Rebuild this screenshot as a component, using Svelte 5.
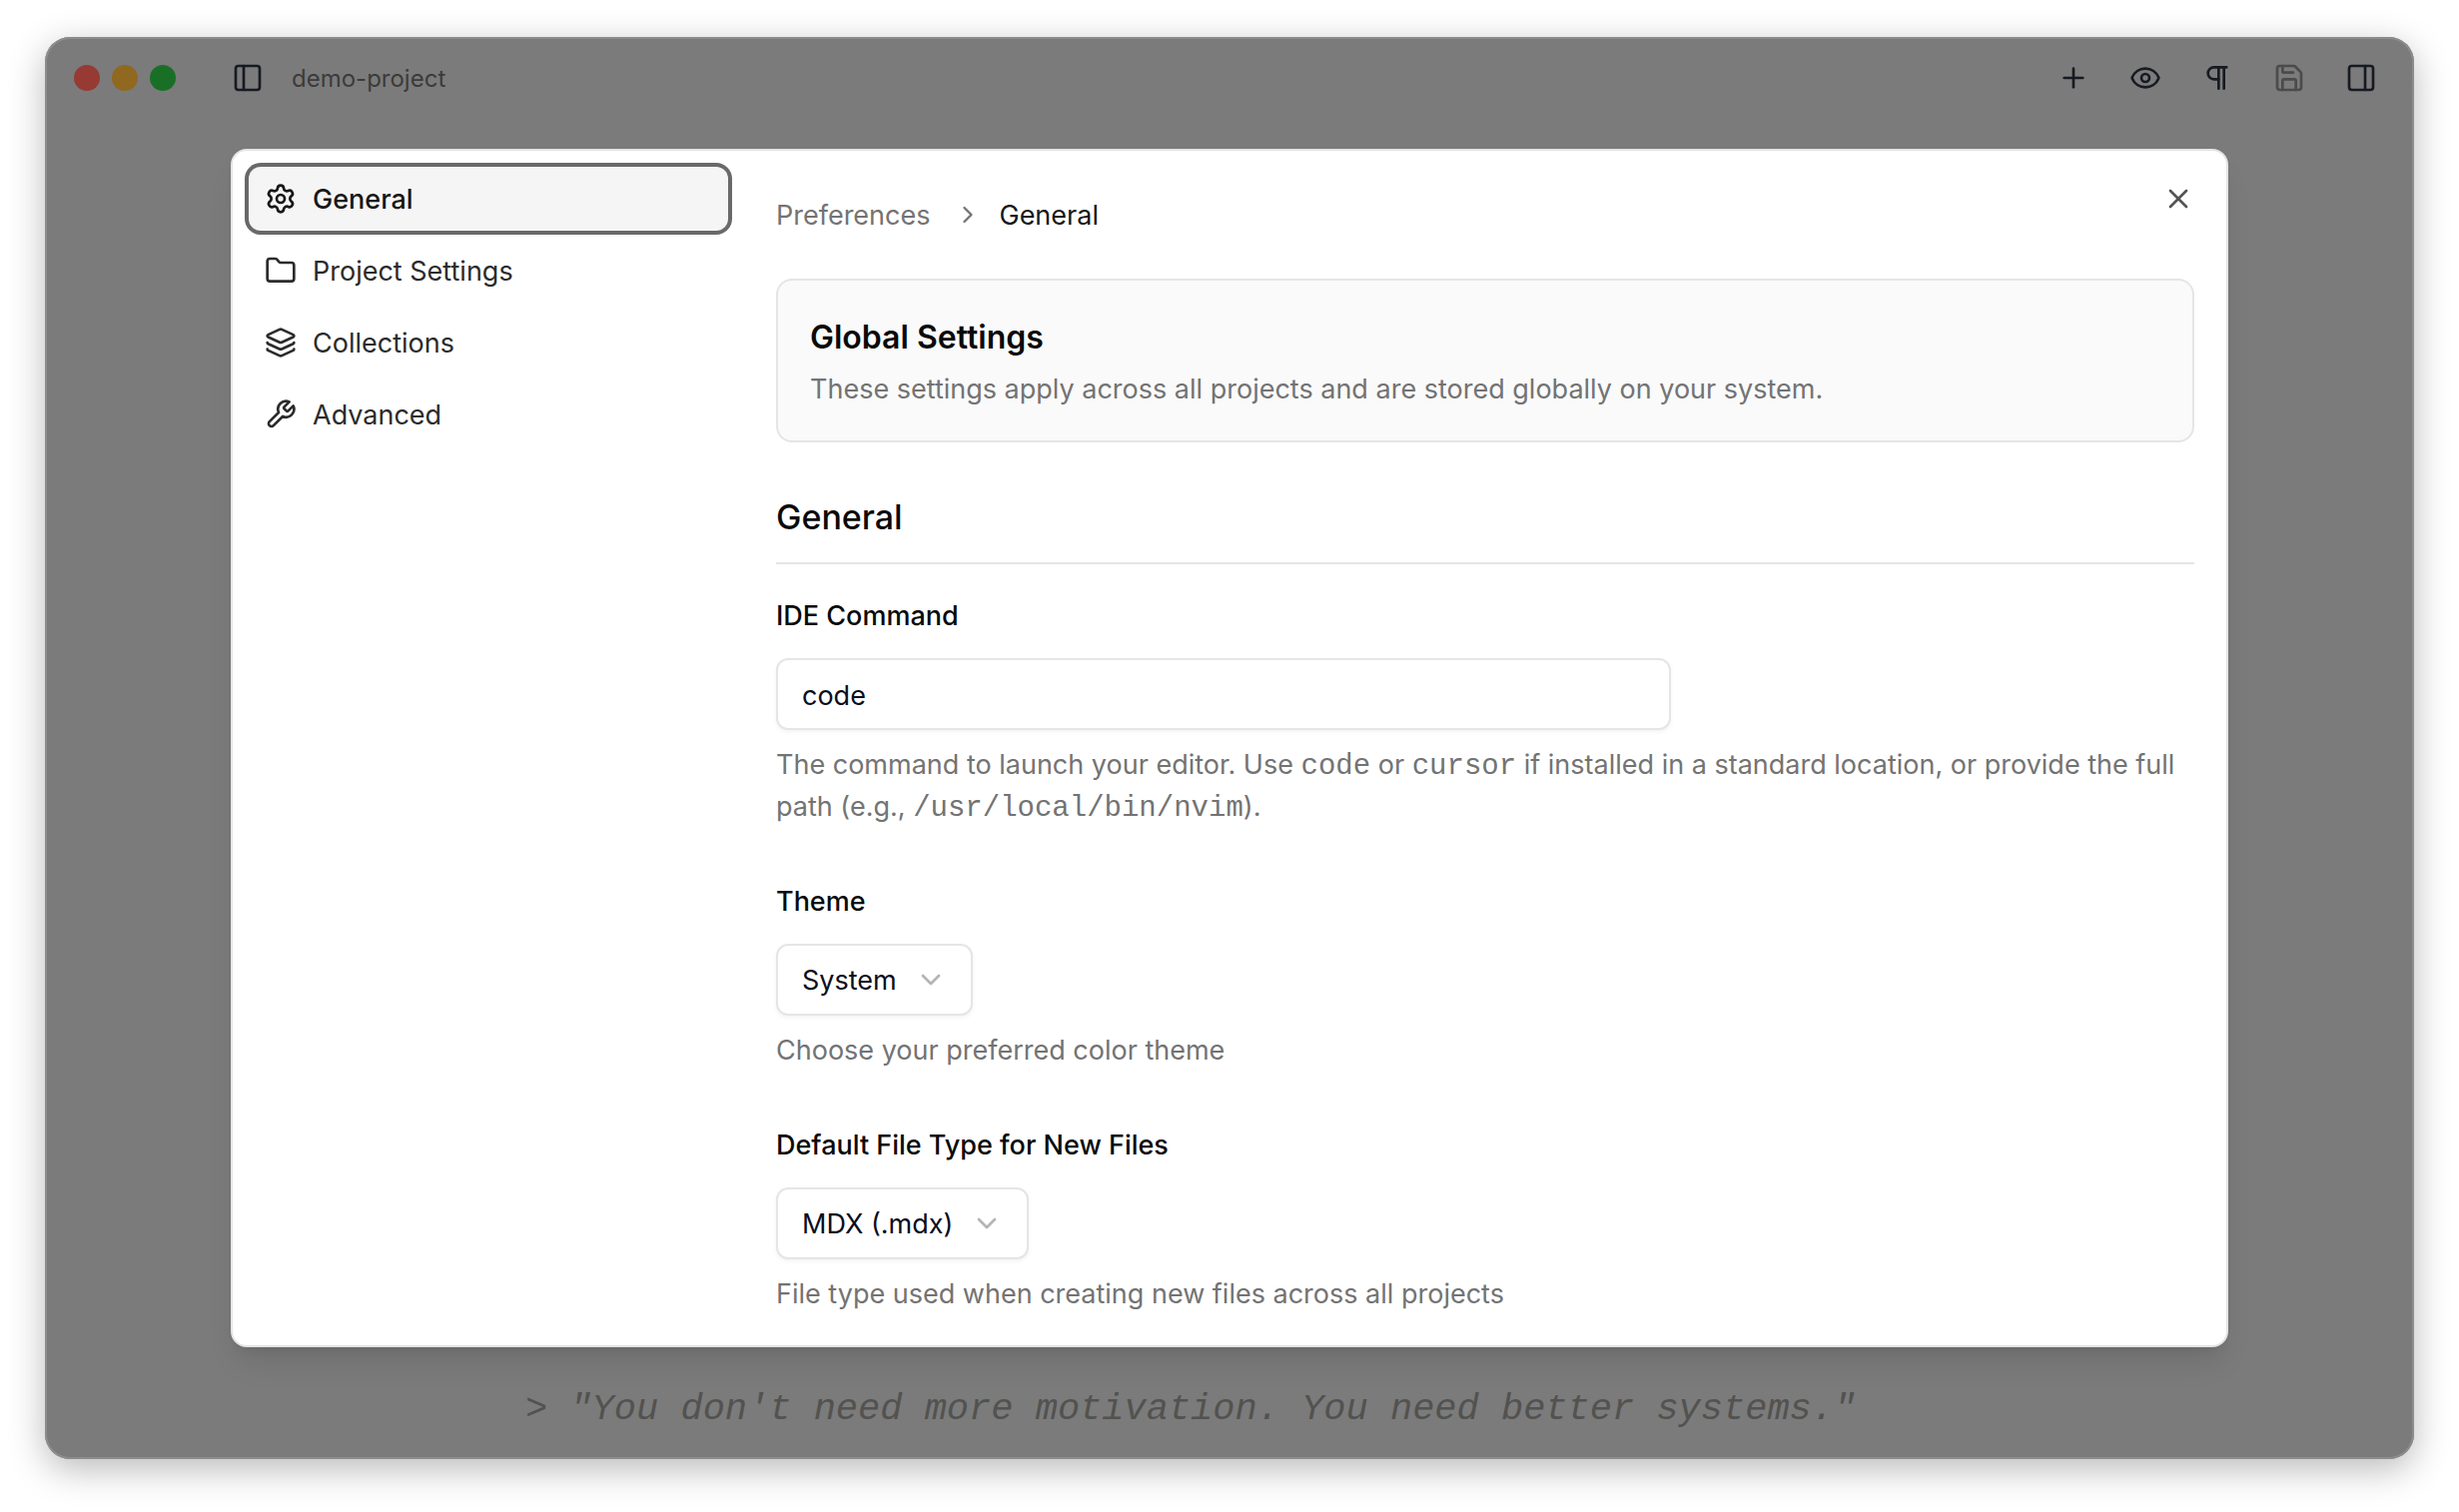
<script>
	let activePane = $state('general');
	let ideCommand = $state('code');
	let theme = $state('system');
	let fileType = $state('mdx');

	const panes = [
		{ id: 'general', label: 'General' },
		{ id: 'project', label: 'Project Settings' },
		{ id: 'collections', label: 'Collections' },
		{ id: 'advanced', label: 'Advanced' }
	];

	const actions = [
		{ icon: 'plus', label: 'New file' },
		{ icon: 'eye', label: 'Focus mode' },
		{ icon: 'pilcrow', label: 'Typewriter mode' },
		{ icon: 'save', label: 'Save', disabled: true },
		{ icon: 'panel-right', label: 'Toggle right panel' }
	];
</script>

{#snippet icon(name)}
	<svg
		class="icon"
		viewBox="0 0 24 24"
		width="32"
		height="32"
		fill="none"
		stroke="currentColor"
		stroke-width="2"
		stroke-linecap="round"
		stroke-linejoin="round"
		aria-hidden="true"
	>
		{#if name === 'general'}
			<path d="M9.671 4.136a2.34 2.34 0 0 1 4.659 0 2.34 2.34 0 0 0 3.319 1.915 2.34 2.34 0 0 1 2.33 4.033 2.34 2.34 0 0 0 0 3.831 2.34 2.34 0 0 1-2.33 4.033 2.34 2.34 0 0 0-3.319 1.915 2.34 2.34 0 0 1-4.659 0 2.34 2.34 0 0 0-3.32-1.915 2.34 2.34 0 0 1-2.33-4.033 2.34 2.34 0 0 0 0-3.831A2.34 2.34 0 0 1 6.35 6.051a2.34 2.34 0 0 0 3.319-1.915" />
			<circle cx="12" cy="12" r="3" />
		{:else if name === 'project'}
			<path d="M20 20a2 2 0 0 0 2-2V8a2 2 0 0 0-2-2h-7.9a2 2 0 0 1-1.69-.9L9.6 3.9A2 2 0 0 0 7.93 3H4a2 2 0 0 0-2 2v13a2 2 0 0 0 2 2Z" />
		{:else if name === 'collections'}
			<path d="M12.83 2.18a2 2 0 0 0-1.66 0L2.6 6.08a1 1 0 0 0 0 1.83l8.58 3.91a2 2 0 0 0 1.66 0l8.58-3.9a1 1 0 0 0 0-1.83z" />
			<path d="M2 12a1 1 0 0 0 .58.91l8.6 3.91a2 2 0 0 0 1.65 0l8.58-3.9A1 1 0 0 0 22 12" />
			<path d="M2 17a1 1 0 0 0 .58.91l8.6 3.91a2 2 0 0 0 1.65 0l8.58-3.9A1 1 0 0 0 22 17" />
		{:else if name === 'advanced'}
			<path d="M14.7 6.3a1 1 0 0 0 0 1.4l1.6 1.6a1 1 0 0 0 1.4 0l3.77-3.77a6 6 0 0 1-7.94 7.94l-6.91 6.91a2.12 2.12 0 0 1-3-3l6.91-6.91a6 6 0 0 1 7.94-7.94l-3.76 3.76z" />
		{:else if name === 'panel-left'}
			<rect width="18" height="18" x="3" y="3" rx="2" />
			<path d="M9 3v18" />
		{:else if name === 'panel-right'}
			<rect width="18" height="18" x="3" y="3" rx="2" />
			<path d="M15 3v18" />
		{:else if name === 'plus'}
			<path d="M5 12h14" />
			<path d="M12 5v14" />
		{:else if name === 'eye'}
			<path d="M2.062 12.348a1 1 0 0 1 0-.696 10.75 10.75 0 0 1 19.876 0 1 1 0 0 1 0 .696 10.75 10.75 0 0 1-19.876 0" />
			<circle cx="12" cy="12" r="3" />
		{:else if name === 'pilcrow'}
			<path d="M13 4v16" />
			<path d="M17 4v16" />
			<path d="M19 4H9.5a4.5 4.5 0 0 0 0 9H13" />
		{:else if name === 'save'}
			<path d="M15.2 3a2 2 0 0 1 1.4.6l3.8 3.8a2 2 0 0 1 .6 1.4V19a2 2 0 0 1-2 2H5a2 2 0 0 1-2-2V5a2 2 0 0 1 2-2z" />
			<path d="M17 21v-7a1 1 0 0 0-1-1H8a1 1 0 0 0-1 1v7" />
			<path d="M7 3v4a1 1 0 0 0 1 1h7" />
		{:else if name === 'close'}
			<path d="M18 6 6 18" />
			<path d="m6 6 12 12" />
		{:else if name === 'chevron-down'}
			<path d="m6 9 6 6 6-6" />
		{:else if name === 'chevron-right'}
			<path d="m9 18 6-6-6-6" />
		{/if}
	</svg>
{/snippet}

<div class="desktop">
	<div class="window">
		<div class="editor">
			<header class="titlebar">
				<div class="lights">
					<button class="light red" aria-label="Close window"></button>
					<button class="light yellow" aria-label="Minimize window"></button>
					<button class="light green" aria-label="Zoom window"></button>
				</div>
				<button class="tool" aria-label="Toggle sidebar">{@render icon('panel-left')}</button>
				<span class="project">demo-project</span>
				<div class="actions">
					{#each actions as action}
						<button class="tool" aria-label={action.label} disabled={action.disabled}>
							{@render icon(action.icon)}
						</button>
					{/each}
				</div>
			</header>
			<p class="quote">&gt; "You don't need more motivation. You need better systems."</p>
		</div>

		<div class="overlay">
			<div class="dialog" role="dialog" aria-label="Preferences">
				<nav class="sidebar">
					{#each panes as pane}
						<button
							class="pane"
							class:active={activePane === pane.id}
							onclick={() => (activePane = pane.id)}
						>
							{@render icon(pane.id)}
							<span class="name">{pane.label}</span>
						</button>
					{/each}
				</nav>

				<main class="content">
					<header class="topbar">
						<a class="crumb" href="#preferences">Preferences</a>
						<span class="separator">{@render icon('chevron-right')}</span>
						<span class="crumb current">General</span>
						<button class="close" aria-label="Close">{@render icon('close')}</button>
					</header>

					<section class="notice">
						<h2>Global Settings</h2>
						<p>These settings apply across all projects and are stored globally on your system.</p>
					</section>

					<section class="group">
						<h3>General</h3>

						<div class="fields">
							<div class="field">
								<label for="ide">IDE Command</label>
								<input id="ide" type="text" bind:value={ideCommand} />
								<p class="hint">
									The command to launch your editor. Use <code>code</code> or <code>cursor</code> if
									installed in a standard location, or provide the full path (e.g.,
									<code>/usr/local/bin/nvim</code>).
								</p>
							</div>

							<div class="field">
								<label for="theme">Theme</label>
								<div class="select">
									<select id="theme" bind:value={theme}>
										<option value="light">Light</option>
										<option value="dark">Dark</option>
										<option value="system">System</option>
									</select>
									<span class="arrow">{@render icon('chevron-down')}</span>
								</div>
								<p class="hint">Choose your preferred color theme</p>
							</div>

							<div class="field">
								<label for="filetype">Default File Type for New Files</label>
								<div class="select">
									<select id="filetype" bind:value={fileType}>
										<option value="md">Markdown (.md)</option>
										<option value="mdx">MDX (.mdx)</option>
									</select>
									<span class="arrow">{@render icon('chevron-down')}</span>
								</div>
								<p class="hint">File type used when creating new files across all projects</p>
							</div>
						</div>
					</section>
				</main>
			</div>
		</div>
	</div>
</div>

<style>
	:global(body) {
		margin: 0;
		background: #fff;
	}

	.desktop {
		box-sizing: border-box;
		display: grid;
		min-height: 100vh;
		padding: 37px 45px 53px;
		font-family: Inter, 'Liberation Sans', sans-serif;
		font-size: 27px;
		line-height: 40px;
		color: #0a0a0a;
	}

	.desktop * {
		box-sizing: border-box;
	}

	h2,
	h3,
	p {
		margin: 0;
	}

	button {
		margin: 0;
		padding: 0;
		border: none;
		background: none;
		font: inherit;
		color: inherit;
	}

	.icon {
		display: block;
		flex: none;
	}

	/* The editor and the dialog share one cell, so the dialog sits over the dimmed window */
	.window {
		display: grid;
		border-radius: 25px;
		background: #7b7b7b;
		box-shadow:
			inset 0 0 0 2px #8c8c8c,
			0 10px 36px rgba(0, 0, 0, 0.28);
	}

	.editor,
	.overlay {
		grid-area: 1 / 1;
		min-width: 0;
	}

	.editor {
		display: flex;
		flex-direction: column;
		justify-content: space-between;
	}

	.titlebar {
		display: flex;
		align-items: center;
		height: 82px;
		padding: 0 25px 0 29px;
		color: #171a22;
	}

	.lights {
		display: flex;
		gap: 12px;
		margin-right: 44px;
	}

	.light {
		width: 26px;
		height: 26px;
		border-radius: 50%;
	}

	.red {
		background: #973a34;
	}

	.yellow {
		background: #906820;
	}

	.green {
		background: #1a6f27;
	}

	.tool {
		display: grid;
		place-items: center;
		width: 56px;
		height: 56px;
	}

	.tool:disabled {
		color: #4b4b4d;
	}

	.project {
		margin-left: 16px;
		padding-top: 2px;
		font-size: 24px;
		color: #3b3b3b;
	}

	.actions {
		display: flex;
		gap: 16px;
		margin-left: auto;
	}

	.quote {
		width: 1410px;
		max-width: 100%;
		margin: 0 auto;
		padding-bottom: 26px;
		font-family: 'Liberation Mono', monospace;
		font-size: 37px;
		font-style: italic;
		line-height: 48px;
		color: #525250;
	}

	.overlay {
		display: grid;
		place-items: center;
	}

	.dialog {
		display: grid;
		grid-template-columns: 512px minmax(0, 1fr);
		width: 2000px;
		max-width: 96%;
		border: 2px solid #e5e5e5;
		border-radius: 16px;
		background: #fff;
		box-shadow:
			0 20px 30px -6px rgba(0, 0, 0, 0.1),
			0 8px 12px -8px rgba(0, 0, 0, 0.1);
	}

	.sidebar {
		display: flex;
		flex-direction: column;
		gap: 8px;
		padding: 16px;
	}

	.pane {
		display: flex;
		align-items: center;
		gap: 16px;
		height: 64px;
		padding: 0 16px;
		border-radius: 12px;
		color: #2b2b2b;
		text-align: left;
	}

	.name {
		padding-top: 2px;
	}

	.pane.active {
		background: #f5f5f5;
		box-shadow: 0 0 0 4px #696969;
		color: #171717;
		font-weight: 500;
	}

	.content {
		padding: 0 32px 30px;
	}

	.topbar {
		display: flex;
		align-items: center;
		height: 128px;
	}

	.crumb {
		padding-top: 2px;
		color: #737373;
		text-decoration: none;
	}

	.crumb.current {
		color: #171717;
	}

	.separator {
		margin: 0 17px 0 24px;
		color: #737373;
	}

	.separator .icon {
		width: 28px;
		height: 28px;
	}

	.close {
		align-self: flex-start;
		margin: 32px 0 0 auto;
		color: #545454;
	}

	.notice {
		padding: 33px 32px 31px;
		border: 2px solid #e5e5e5;
		border-radius: 16px;
		background: #fafafa;
	}

	.notice h2 {
		margin-bottom: 8px;
		font-size: 32px;
		font-weight: 600;
		line-height: 48px;
	}

	.notice p,
	.hint {
		color: #737373;
	}

	.group {
		margin-top: 48px;
	}

	.group h3 {
		padding-bottom: 18px;
		border-bottom: 2px solid #e5e5e5;
		font-size: 34px;
		font-weight: 500;
		line-height: 54px;
	}

	.fields {
		display: flex;
		flex-direction: column;
		gap: 54px;
		margin-top: 32px;
	}

	label {
		display: block;
		margin-bottom: 22px;
		font-weight: 500;
		line-height: 40px;
	}

	input,
	select {
		display: block;
		height: 72px;
		padding: 2px 24px 0;
		border: 2px solid #e5e5e5;
		border-radius: 12px;
		background: #fff;
		box-shadow: 0 2px 4px rgba(0, 0, 0, 0.05);
		font: inherit;
		color: #0b0d1c;
	}

	input {
		width: 896px;
		max-width: 100%;
	}

	.select {
		position: relative;
		width: fit-content;
	}

	select {
		appearance: none;
		field-sizing: content;
		padding-right: 74px;
	}

	.arrow {
		position: absolute;
		top: 20px;
		right: 26px;
		color: #b4b4b4;
		pointer-events: none;
	}

	.hint {
		margin-top: 14px;
		line-height: 42px;
	}

	code {
		font-family: 'Liberation Mono', monospace;
		font-size: 29px;
		line-height: 1;
	}
</style>
